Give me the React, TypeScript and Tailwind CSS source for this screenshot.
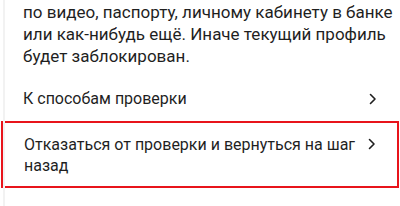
export default function App() {
  return (
    <div className="w-[400px] h-[206px] bg-white overflow-hidden relative text-[#1f1f1f]" style={{ fontFamily: 'Roboto, "Noto Sans", sans-serif' }}>
      <div className="absolute left-[3px] top-0 bottom-0 w-[2px] bg-[#f2f2f2]" />
      <p className="pl-[23px] pt-[1px] text-[17px] leading-[22px] whitespace-nowrap">
        по видео, паспорту, личному кабинету в банке
        <br />
        или как-нибудь ещё. Иначе текущий профиль
        <br />
        будет заблокирован.
      </p>
      <div className="mt-[21px] flex items-center justify-between pl-[23px] pr-[22px] h-[22px] text-[16px] leading-[22px]">
        <span>К способам проверки</span>
        <Chevron />
      </div>
      <div className="mx-[1px] mt-[11px] border-2 border-[#e8141b] flex items-start justify-between pl-[21px] pr-[20px] pt-[11px] pb-[10px] text-[16px] leading-[21px]">
        <span className="whitespace-nowrap">
          Отказаться от проверки и вернуться на шаг
          <br />
          назад
        </span>
        <span className="mt-[4px]"><Chevron /></span>
      </div>
    </div>
  );
}

function Chevron() {
  return (
    <svg width="10" height="12" viewBox="0 0 10 12" fill="none">
      <path d="M2.5 1.5 L7 6 L2.5 10.5" stroke="#1f1f1f" strokeWidth="1.6" strokeLinecap="round" strokeLinejoin="round" />
    </svg>
  );
}
